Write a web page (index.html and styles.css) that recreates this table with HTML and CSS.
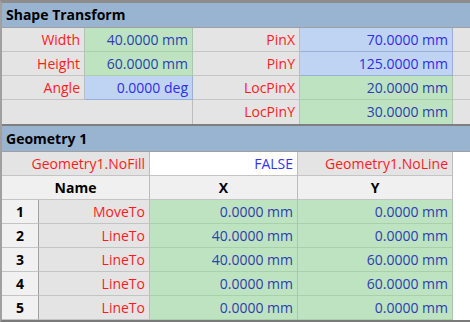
FILE: index.html
```html
<!DOCTYPE html>
<html>
<head>
<meta charset="utf-8">
<link rel="stylesheet" href="styles.css">
</head>
<body>
<div class="sheet">
  <section class="sec sec-xform">
    <div class="title first">Shape Transform</div>
    <div class="row r5">
      <div class="c lbl">Width</div>
      <div class="c val g">40.0000 mm</div>
      <div class="c lbl">PinX</div>
      <div class="c val b">70.0000 mm</div>
      <div class="c pad"></div>
    </div>
    <div class="row r5">
      <div class="c lbl">Height</div>
      <div class="c val g">60.0000 mm</div>
      <div class="c lbl">PinY</div>
      <div class="c val b">125.0000 mm</div>
      <div class="c pad"></div>
    </div>
    <div class="row r5">
      <div class="c lbl">Angle</div>
      <div class="c val b">0.0000 deg</div>
      <div class="c lbl">LocPinX</div>
      <div class="c val g">20.0000 mm</div>
      <div class="c pad"></div>
    </div>
    <div class="row r5 lastrow">
      <div class="c lbl span2"></div>
      <div class="c lbl">LocPinY</div>
      <div class="c val g">30.0000 mm</div>
      <div class="c pad"></div>
    </div>
  </section>
  <section class="sec sec-geo">
    <div class="title">Geometry 1</div>
    <div class="row r4">
      <div class="c lbl">Geometry1.NoFill</div>
      <div class="c val w">FALSE</div>
      <div class="c lbl">Geometry1.NoLine</div>
      <div class="c blank"></div>
    </div>
    <div class="row r4 head">
      <div class="c hd">Name</div>
      <div class="c hd">X</div>
      <div class="c hd">Y</div>
      <div class="c blank"></div>
    </div>
    <div class="row r6">
      <div class="c idx">1</div><div class="c lbl">MoveTo</div>
      <div class="c val g">0.0000 mm</div><div class="c val g">0.0000 mm</div><div class="c blank"></div>
    </div>
    <div class="row r6">
      <div class="c idx">2</div><div class="c lbl">LineTo</div>
      <div class="c val g">40.0000 mm</div><div class="c val g">0.0000 mm</div><div class="c blank"></div>
    </div>
    <div class="row r6">
      <div class="c idx">3</div><div class="c lbl">LineTo</div>
      <div class="c val g">40.0000 mm</div><div class="c val g">60.0000 mm</div><div class="c blank"></div>
    </div>
    <div class="row r6">
      <div class="c idx">4</div><div class="c lbl">LineTo</div>
      <div class="c val g">0.0000 mm</div><div class="c val g">60.0000 mm</div><div class="c blank"></div>
    </div>
    <div class="row r6">
      <div class="c idx">5</div><div class="c lbl">LineTo</div>
      <div class="c val g">0.0000 mm</div><div class="c val g">0.0000 mm</div><div class="c blank"></div>
    </div>
  </section>
</div>
</body>
</html>
```

FILE: styles.css
```css
* { box-sizing: border-box; }
html, body { margin: 0; padding: 0; background: #ffffff; }
body {
  width: 470px;
  height: 322px;
  overflow: hidden;
  font-family: "Open Sans", "Noto Sans", sans-serif;
  font-size: 14px;
}
.sheet {
  width: 470px;
  border-top: 3px solid #8c8c8c;
  border-left: 2px solid #a0a0a0;
  border-bottom: 2px solid #7a7a7a;
}
.sec + .sec { border-top: 2px solid #7f7f7f; }
.title {
  height: 25px;
  background: #99b4d1;
  font-weight: 700;
  color: #000;
  padding-left: 4px;
  line-height: 24px;
  border-bottom: 1px solid #a0a0a0;
}
.sec-geo .title { height: 26px; line-height: 25px; }
.row {
  display: grid;
  height: 24px;
}
.r5 { grid-template-columns: 83px 108px 107px 153px 1fr; }
.r5 .span2 { grid-column: span 2; }
.r4 { grid-template-columns: 148px 148px 155px 1fr; }
.r6 { grid-template-columns: 37px 111px 148px 155px 1fr; }
.c {
  border-right: 1px solid #bcbcbc;
  border-bottom: 1px solid #c4c4c4;
  line-height: 23px;
  white-space: nowrap;
  overflow: hidden;
  padding: 0 4px;
}
.lastrow .c { border-bottom: none; }
.lbl { background: #e4e4e4; color: #ff1a1a; text-align: right; }
.val { text-align: right; }
.g { background: #bde3c1; color: #2b40b0; border-bottom-color: #a9cfad; border-right-color: #a8c8ab; }
.b { background: #bfd3f3; color: #2e2ee8; border-bottom-color: #98afd6; border-right-color: #98afd6; }
.w { background: #ffffff; color: #3333ee; }
.pad { background: #e4e4e4; border-right: none; }
.blank { background: #ffffff; border-right: none; border-bottom: none; }
.hd { background: #f0f0f0; font-weight: 700; color: #000; text-align: center; }
.idx { background: #f1f1f1; font-weight: 700; color: #000; text-align: center; border-right-color: #a0a0a0; }
```
